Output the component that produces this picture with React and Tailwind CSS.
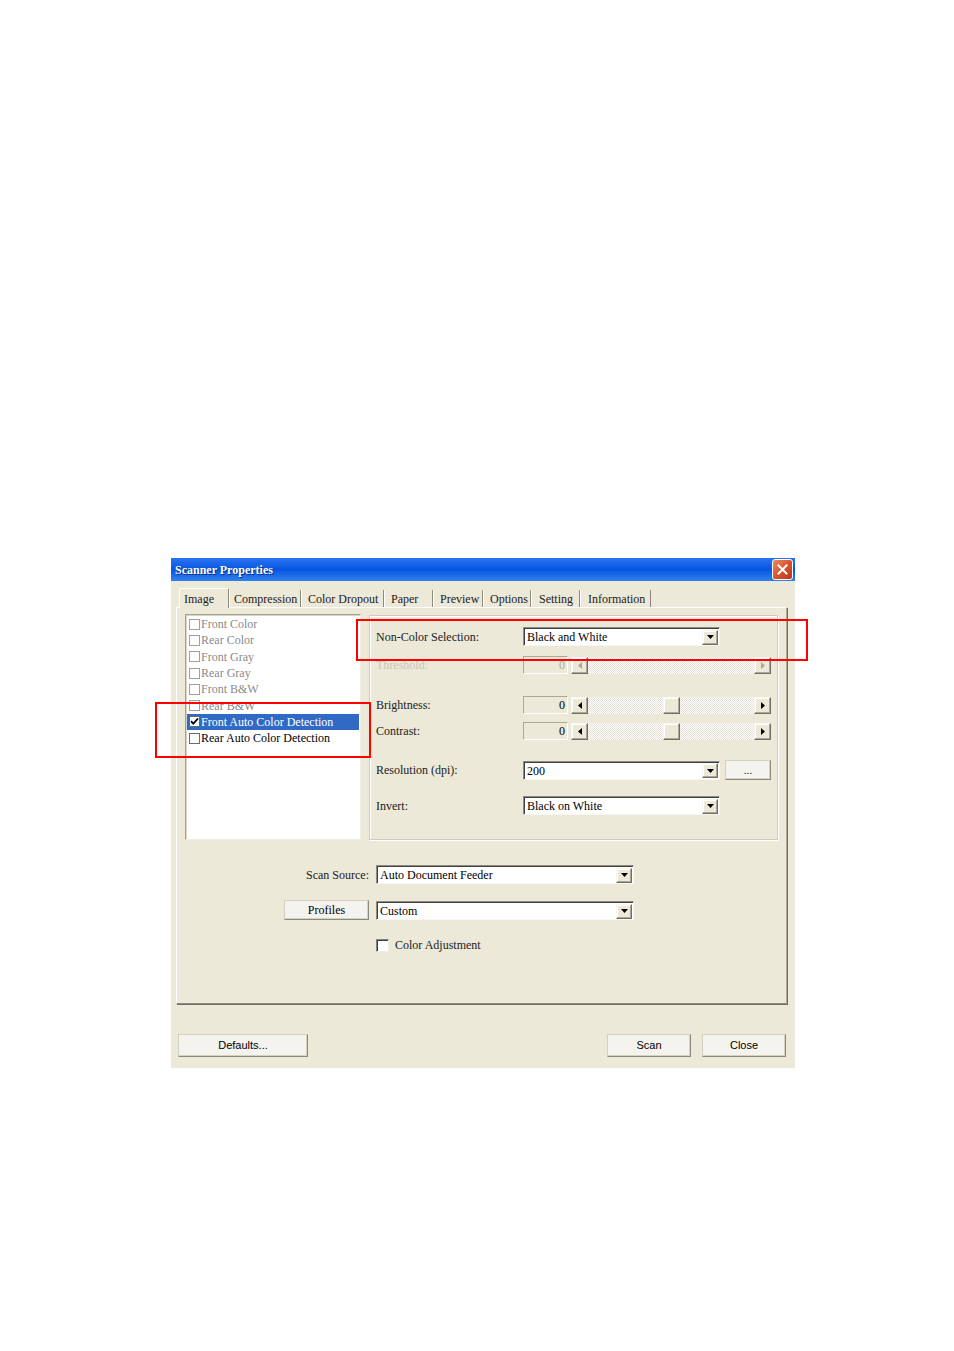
import React from 'react'

const TABS = [
  { label: 'Image', w: 'w-[50px]', pl: 'pl-[4px]', active: true },
  { label: 'Compression', w: 'w-[72px]', pl: 'pl-[4px]' },
  { label: 'Color Dropout', w: 'w-[83px]', pl: 'pl-[6px]' },
  { label: 'Paper', w: 'w-[49px]', pl: 'pl-[6px]' },
  { label: 'Preview', w: 'w-[50px]', pl: 'pl-[6px]' },
  { label: 'Options', w: 'w-[48px]', pl: 'pl-[6px]' },
  { label: 'Setting', w: 'w-[49px]', pl: 'pl-[7px]' },
  { label: 'Information', w: 'w-[71px]', pl: 'pl-[7px]' },
]

const ITEMS = [
  { label: 'Front Color', disabled: true },
  { label: 'Rear Color', disabled: true },
  { label: 'Front Gray', disabled: true },
  { label: 'Rear Gray', disabled: true },
  { label: 'Front B&W', disabled: true },
  { label: 'Rear B&W', disabled: true },
  { label: 'Front Auto Color Detection', checked: true, selected: true },
  { label: 'Rear Auto Color Detection' },
]

const serif = "font-['Liberation_Serif','Times_New_Roman',serif]"
const raised = 'bg-[#ece9d8] border border-t-[#f7f6f1] border-l-[#f7f6f1] border-r-[#716f64] border-b-[#716f64] shadow-[inset_-1px_-1px_0_#aca899,inset_1px_1px_0_#ffffff]'

function Tri({ dir = 'down', color = '#000' }) {
  if (dir === 'left') return <svg width="4" height="7" viewBox="0 0 4 7"><path d="M4 0v7L0 3.5z" fill={color} /></svg>
  if (dir === 'right') return <svg width="4" height="7" viewBox="0 0 4 7"><path d="M0 0v7l4-3.5z" fill={color} /></svg>
  return <svg width="7" height="4" viewBox="0 0 7 4"><path d="M0 0h7L3.5 4z" fill={color} /></svg>
}

function Combo({ w, value }) {
  return (
    <div className={`${w} h-[19px] bg-white border border-t-[#8e8c80] border-l-[#8e8c80] border-r-[#f7f6f1] border-b-[#f7f6f1] shadow-[inset_1px_1px_0_#404040] flex items-center pl-[3px] pr-[1px] pt-[1px]`}>
      <span className={`flex-1 text-[12px] text-black ${serif} leading-none`}>{value}</span>
      <div className={`w-[16px] h-[15px] ${raised} flex items-center justify-center`}>
        <Tri />
      </div>
    </div>
  )
}

function Scroll({ disabled }) {
  const arrow = disabled ? '#aca899' : '#000'
  return (
    <div className="w-[200px] h-[17px] flex bg-[image:repeating-conic-gradient(#ffffff_0_25%,#e4e1d3_0_50%)] bg-[length:2px_2px]">
      <div className={`w-[17px] h-[17px] ${raised} flex items-center justify-center`}><Tri dir="left" color={arrow} /></div>
      <div className="flex-1 flex">
        {!disabled && <div className={`ml-[75px] w-[17px] h-[17px] ${raised}`} />}
      </div>
      <div className={`w-[17px] h-[17px] ${raised} flex items-center justify-center`}><Tri dir="right" color={arrow} /></div>
    </div>
  )
}

function ValueBox({ disabled }) {
  return (
    <div className={`w-[45px] h-[18px] bg-[#ece9d8] border border-t-[#aca899] border-l-[#aca899] border-r-white border-b-white flex items-center justify-end pr-[2px] text-[12px] ${serif} ${disabled ? 'text-[#aca899]' : 'text-black'}`}>0</div>
  )
}

function Row({ label, mt, disabled, children }) {
  return (
    <div className={`flex items-center ${mt}`}>
      <div className={`w-[147px] text-[12px] ${serif} ${disabled ? 'text-[#c8c5b5]' : 'text-[#222]'}`}>{label}</div>
      <div className="flex items-center gap-[3px]">{children}</div>
    </div>
  )
}

function Btn({ w, h = 'h-[23px]', children, font }) {
  return (
    <div className={`${w} ${h} bg-[#f4f3ee] border border-[#d4d0c0] border-r-[#8c8a7c] border-b-[#8c8a7c] shadow-[inset_-1px_-1px_0_#d6d2c2] flex items-center justify-center text-black ${font}`}>
      {children}
    </div>
  )
}

export default function App() {
  return (
    <div className="relative w-[954px] h-[1351px] bg-white pt-[558px] pl-[171px]">
      <div className="w-[624px] h-[510px] flex flex-col bg-[#ece9d8]">
        {/* title bar */}
        <div className="h-[23px] flex items-center justify-between pl-[4px] pr-[2px] bg-gradient-to-b from-[#2a73f0] via-[#0555e2] to-[#2f82ee]">
          <span className={`text-white font-bold text-[12px] ${serif} [text-shadow:1px_1px_0_#0a2a8a]`}>Scanner Properties</span>
          <div className="w-[21px] h-[21px] rounded-[3px] border border-white bg-gradient-to-br from-[#ea8a66] via-[#d9542c] to-[#b8391a] flex items-center justify-center">
            <svg width="11" height="11" viewBox="0 0 11 11"><path d="M1.5 1.5l8 8M9.5 1.5l-8 8" stroke="#fff" strokeWidth="2" strokeLinecap="square" /></svg>
          </div>
        </div>

        <div className="flex-1 flex flex-col pl-[5px] pr-[8px] pt-[7px]">
          {/* tabs */}
          <div className="flex items-end pl-[3px] h-[19px] relative z-10">
            {TABS.map(t => (
              <div key={t.label}
                className={`${t.w} ${t.pl} flex items-center text-[12px] ${serif} text-[#222] border-r border-r-[#8c8a7c] ${t.active ? 'h-[20px] border-l border-t border-l-white border-t-white bg-[#ece9d8] -mb-[1px] rounded-t-[2px]' : 'h-[17px] border-l border-l-white pt-[1px]'}`}>
                {t.label}
              </div>
            ))}
          </div>

          {/* tab page */}
          <div className="h-[397px] border border-t-white border-l-white border-r-[#aca899] border-b-[#8c8a7c] shadow-[1px_1px_0_#716f64] flex flex-col">
            <div className="flex items-start pl-[8px] pt-[6px] gap-[8px]">
              {/* list */}
              <div className="w-[176px] h-[226px] bg-white border border-t-[#a5a291] border-l-[#a5a291] border-r-[#f1efe2] border-b-[#f1efe2] shadow-[inset_1px_1px_0_#d8d5c6] pt-[1px] pl-[1px] pr-[1px]">
                {ITEMS.map(it => (
                  <div key={it.label}
                    className={`h-[16.3px] flex items-center pl-[2px] text-[12px] ${serif} whitespace-nowrap ${it.selected ? 'bg-[#316ac5] text-white' : it.disabled ? 'text-[#8a8a8a]' : 'text-black'}`}>
                    <div className={`w-[11px] h-[11px] bg-white border ${it.disabled ? 'border-[#a0a0a0]' : 'border-[#6a6a6a]'} flex items-center justify-center mr-[1px]`}>
                      {it.checked && (
                        <svg width="9" height="9" viewBox="0 0 9 9"><path d="M1 4.2l2.3 2.5L8 1.5" stroke="#000" strokeWidth="1.8" fill="none" /></svg>
                      )}
                    </div>
                    {it.label}
                  </div>
                ))}
              </div>

              {/* group */}
              <div className="mt-[1px] w-[409px] h-[225px] border border-[#d0cdbd] shadow-[inset_1px_1px_0_#ffffff,1px_1px_0_#ffffff] pl-[6px] flex flex-col">
                <Row label="Non-Color Selection:" mt="mt-[11px]">
                  <Combo w="w-[197px]" value="Black and  White" />
                </Row>
                <Row label="Threshold:" mt="mt-[10px]" disabled>
                  <ValueBox disabled />
                  <Scroll disabled />
                </Row>
                <Row label="Brightness:" mt="mt-[22px]">
                  <ValueBox />
                  <Scroll />
                </Row>
                <Row label="Contrast:" mt="mt-[8px]">
                  <ValueBox />
                  <Scroll />
                </Row>
                <Row label="Resolution (dpi):" mt="mt-[20px]">
                  <Combo w="w-[197px]" value="200" />
                  <div className="ml-[2px]">
                    <Btn w="w-[46px]" h="h-[20px]" font="font-['Liberation_Sans',sans-serif] text-[10px] text-[#555]">...</Btn>
                  </div>
                </Row>
                <Row label="Invert:" mt="mt-[16px]">
                  <Combo w="w-[197px]" value="Black on White" />
                </Row>
              </div>
            </div>

            {/* lower controls */}
            <div className="flex items-center mt-[25px]">
              <div className={`w-[192px] text-right text-[12px] ${serif} text-[#222]`}>Scan Source:</div>
              <div className="ml-[7px]"><Combo w="w-[258px]" value="Auto Document Feeder" /></div>
            </div>
            <div className="flex items-center mt-[15px]">
              <div className="w-[192px] flex justify-end">
                <Btn w="w-[85px]" h="h-[20px]" font={`text-[12px] ${serif}`}>Profiles</Btn>
              </div>
              <div className="ml-[7px] mt-[2px]"><Combo w="w-[258px]" value="Custom" /></div>
            </div>
            <div className="flex items-center mt-[16px] pl-[199px]">
              <div className="w-[13px] h-[13px] bg-white border border-t-[#808080] border-l-[#808080] border-r-[#f1efe2] border-b-[#f1efe2] shadow-[inset_1px_1px_0_#404040]" />
              <span className={`ml-[6px] text-[12px] ${serif} text-[#222]`}>Color Adjustment</span>
            </div>
          </div>

          {/* bottom buttons */}
          <div className="flex items-center mt-[30px] pl-[2px] pr-[1px]">
            <Btn w="w-[130px]" font="font-['Liberation_Sans',sans-serif] text-[11px]">Defaults...</Btn>
            <div className="flex-1" />
            <Btn w="w-[84px]" font="font-['Liberation_Sans',sans-serif] text-[11px]">Scan</Btn>
            <div className="ml-[11px]">
              <Btn w="w-[84px]" font="font-['Liberation_Sans',sans-serif] text-[11px]">Close</Btn>
            </div>
          </div>
        </div>
      </div>

      {/* red annotation boxes */}
      <div className="absolute left-[356px] top-[619px] w-[452px] h-[42px] border-2 border-[#f00]" />
      <div className="absolute left-[155px] top-[702px] w-[216px] h-[56px] border-2 border-[#f00]" />
    </div>
  )
}
